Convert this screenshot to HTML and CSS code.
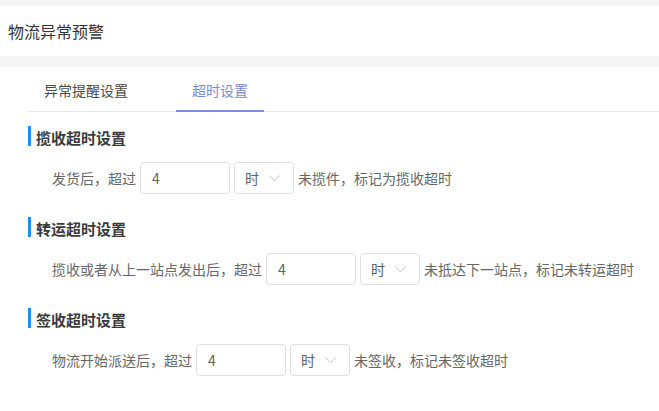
FILE: index.html
```html
<!DOCTYPE html>
<html lang="zh-CN">
<head>
<meta charset="utf-8">
<title>物流异常预警</title>
<link rel="stylesheet" href="styles.css">
</head>
<body>
<div class="page">
  <header class="header">物流异常预警</header>
  <main class="panel">
    <nav class="tabs">
      <div class="tab">异常提醒设置</div>
      <div class="tab active">超时设置</div>
    </nav>
    <section class="section">
      <h3 class="sec-title">揽收超时设置</h3>
      <div class="row">
        <span>发货后，超过</span>
        <div class="input">4</div>
        <div class="select"><span>时</span><svg class="chev" width="11" height="7" viewBox="0 0 11 7"><polyline points="0.5,0.5 5.5,6 10.5,0.5" fill="none" stroke="#c0c4cc" stroke-width="1"/></svg></div>
        <span>未揽件，标记为揽收超时</span>
      </div>
    </section>
    <section class="section">
      <h3 class="sec-title">转运超时设置</h3>
      <div class="row">
        <span>揽收或者从上一站点发出后，超过</span>
        <div class="input">4</div>
        <div class="select"><span>时</span><svg class="chev" width="11" height="7" viewBox="0 0 11 7"><polyline points="0.5,0.5 5.5,6 10.5,0.5" fill="none" stroke="#c0c4cc" stroke-width="1"/></svg></div>
        <span>未抵达下一站点，标记未转运超时</span>
      </div>
    </section>
    <section class="section">
      <h3 class="sec-title">签收超时设置</h3>
      <div class="row">
        <span>物流开始派送后，超过</span>
        <div class="input">4</div>
        <div class="select"><span>时</span><svg class="chev" width="11" height="7" viewBox="0 0 11 7"><polyline points="0.5,0.5 5.5,6 10.5,0.5" fill="none" stroke="#c0c4cc" stroke-width="1"/></svg></div>
        <span>未签收，标记未签收超时</span>
      </div>
    </section>
  </main>
</div>
</body>
</html>
```
FILE: styles.css
```css
html, body {
  margin: 0;
  padding: 0;
  background: #f5f5f5;
  font-family: "Noto Sans CJK SC", "Noto Sans", sans-serif;
}
.page {
  padding-top: 6px;
  width: 659px;
  height: 411px;
  box-sizing: border-box;
  overflow: hidden;
}
.header {
  background: #fff;
  height: 50px;
  line-height: 50px;
  padding-left: 8px;
  font-size: 16px;
  color: #333;
  margin-bottom: 11px;
}
.panel {
  background: #fff;
  height: 400px;
  padding-left: 28px;
}
.tabs {
  display: flex;
  gap: 32px;
  border-bottom: 1px solid #e4e7ed;
  height: 44px;
}
.tab {
  padding: 3px 16px 0;
  height: 41px;
  line-height: 41px;
  font-size: 14px;
  color: #4a4a4a;
  box-sizing: content-box;
}
.tab.active {
  color: #7a8ad8;
  border-bottom: 2px solid #7a8ce0;
  height: 40px;
}
.section {
  margin: 0;
}
.section:first-of-type {
  padding-top: 14px;
}
.section + .section {
  margin-top: 23px;
}
.sec-title {
  display: flex;
  align-items: flex-start;
  margin: 0;
  height: 24px;
  line-height: 24px;
  font-size: 15px;
  font-weight: bold;
  color: #3a3a3a;
}
.sec-title::before {
  content: "";
  width: 3px;
  height: 20px;
  background: #1890ff;
  margin-right: 5px;
}
.row {
  display: flex;
  align-items: center;
  gap: 4px;
  margin-top: 12px;
  padding-left: 24px;
  font-size: 14px;
  color: #666;
  height: 32px;
}
.input {
  width: 90px;
  height: 32px;
  box-sizing: border-box;
  border: 1px solid #dcdfe6;
  border-radius: 4px;
  padding-left: 11px;
  line-height: 30px;
  color: #606266;
}
.select {
  width: 60px;
  height: 32px;
  box-sizing: border-box;
  border: 1px solid #dcdfe6;
  border-radius: 4px;
  padding-left: 10px;
  display: flex;
  align-items: center;
  color: #606266;
}
.chev {
  margin-left: 10px;
}
```
